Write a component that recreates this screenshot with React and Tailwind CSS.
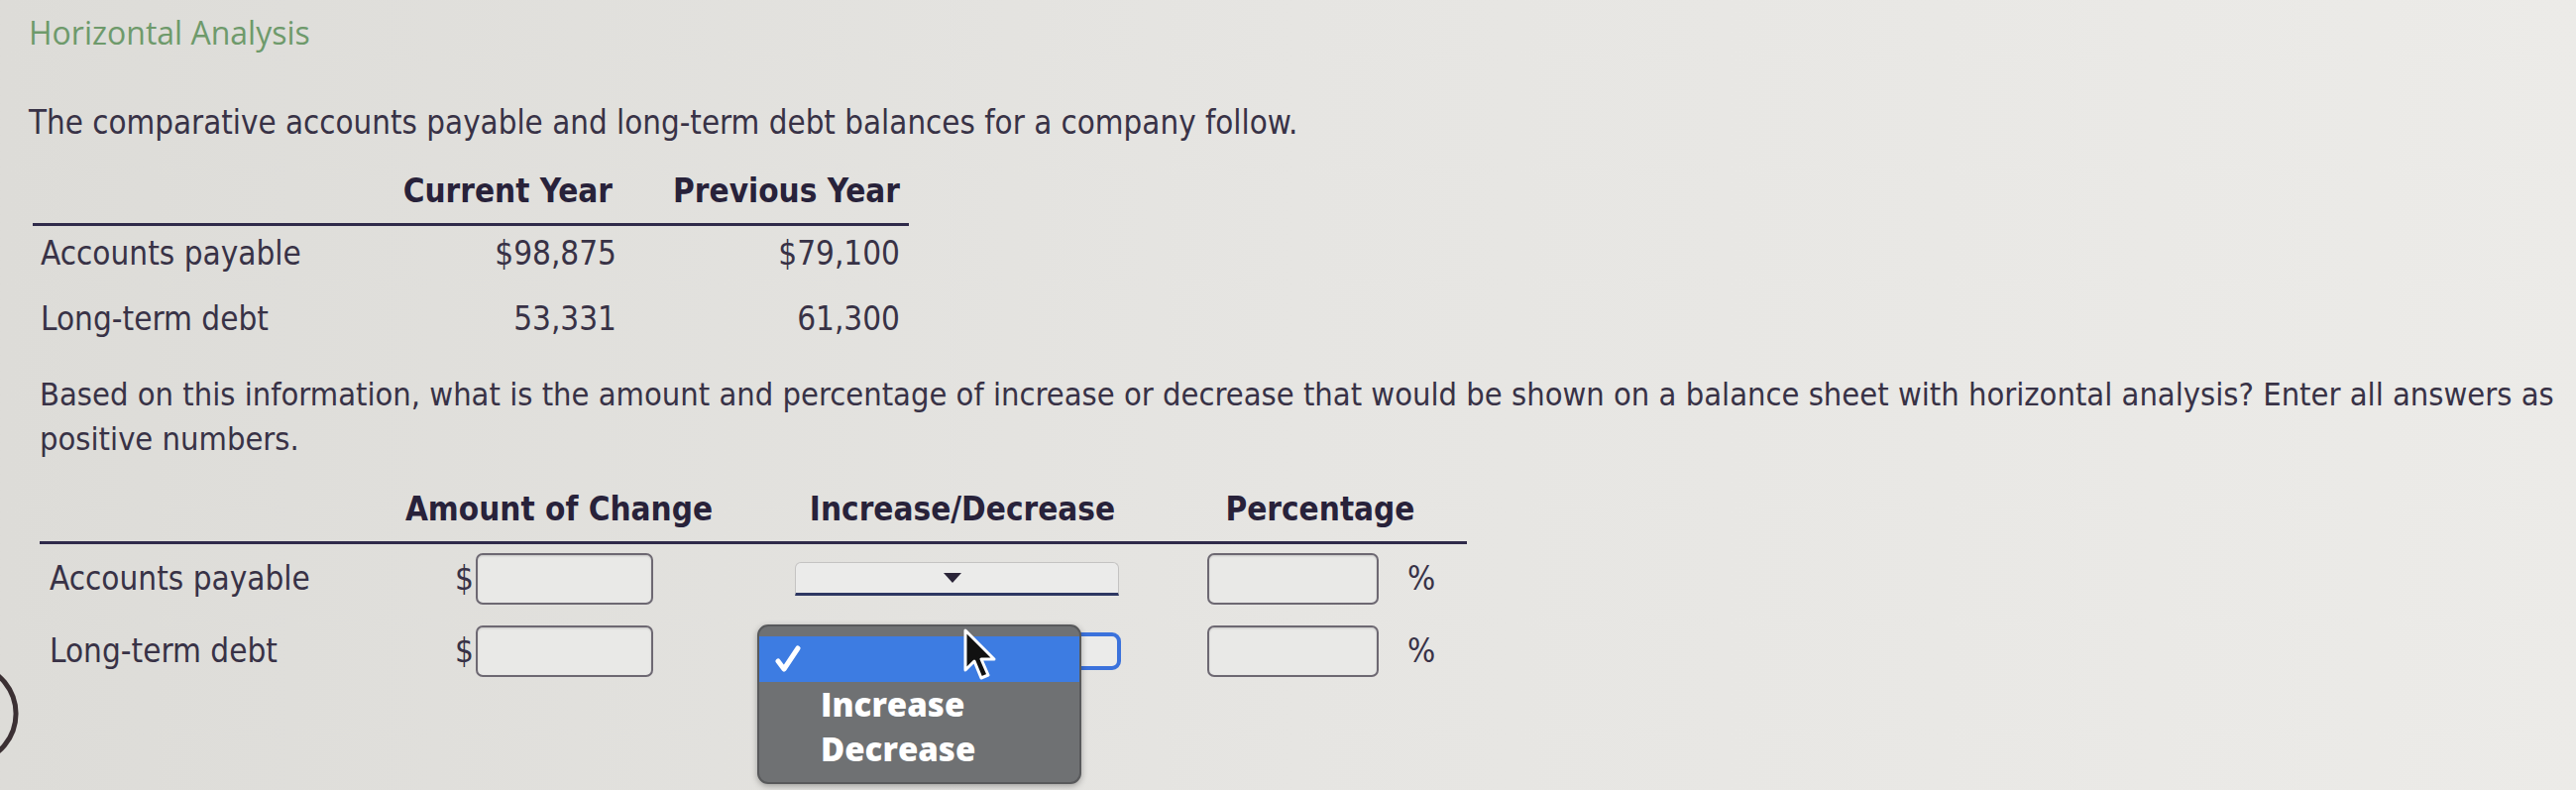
import React from 'react';

const font = { fontFamily: "'DejaVu Sans Condensed', 'Open Sans', sans-serif" };

const TextBox = ({ w }) => (
    <div className={`h-[52px] ${w} rounded-[7px] border-2 border-[#6d6872] bg-[#e9e9e7] shadow-[inset_0_1px_2px_rgba(0,0,0,0.15)]`} />
);

const App = () => {
    return (
        <div
            className="relative min-h-screen w-full overflow-hidden bg-gradient-to-r from-[#dddcd8] via-[#e6e5e2] to-[#ecebe8] text-[#383246]"
            style={font}
        >
            <div className="pl-[29px] pt-[13px]">
                <h1 className="text-[32px] leading-[40px] text-[#6e9a6b]" style={{ fontFamily: "'Open Sans', sans-serif" }}>
                    Horizontal Analysis
                </h1>
                <p className="mt-[49px] text-[32.8px] leading-[44px]">
                    The comparative accounts payable and long-term debt balances for a company follow.
                </p>

                {/* balances table */}
                <div className="ml-[4px] mt-[14px] w-[884px] text-[33px]">
                    <div className="grid h-[68px] grid-cols-[367px_230px_287px] items-center border-b-[3px] border-[#2f2a4a] font-bold text-[#28223a]">
                        <div />
                        <div className="pr-[12px] text-right">Current Year</div>
                        <div className="pr-[9px] text-right">Previous Year</div>
                    </div>
                    <div className="grid h-[56px] grid-cols-[367px_230px_287px] items-center">
                        <div className="pl-[8px]">Accounts payable</div>
                        <div className="pr-[8px] text-right">$98,875</div>
                        <div className="pr-[9px] text-right">$79,100</div>
                    </div>
                    <div className="grid h-[76px] grid-cols-[367px_230px_287px] items-center">
                        <div className="pl-[8px]">Long-term debt</div>
                        <div className="pr-[8px] text-right">53,331</div>
                        <div className="pr-[9px] text-right">61,300</div>
                    </div>
                </div>

                <p className="ml-[11px] mt-[16px] w-[2560px] text-[32.4px] leading-[45px]">
                    Based on this information, what is the amount and percentage of increase or decrease that would be shown on a balance sheet with horizontal analysis? Enter all answers as positive numbers.
                </p>

                {/* answer table */}
                <div className="ml-[11px] w-[1440px] text-[33px]">
                    <div className="grid h-[83px] grid-cols-[380px_340px_400px_320px] items-center border-b-[3px] border-[#2f2a4a] pt-[15px] font-bold text-[#28223a]">
                        <div />
                        <div className="flex justify-center whitespace-nowrap pr-[52px]">Amount of Change</div>
                        <div className="flex justify-center whitespace-nowrap pl-[22px]">Increase/Decrease</div>
                        <div className="flex justify-center whitespace-nowrap pl-[24px]">Percentage</div>
                    </div>

                    <div className="grid h-[70px] grid-cols-[380px_340px_400px_320px] items-center">
                        <div className="pl-[10px]">Accounts payable</div>
                        <div className="flex items-center gap-[2px] pl-[39px]">
                            <span>$</span>
                            <TextBox w="w-[179px]" />
                        </div>
                        <div className="pl-[42px]">
                            <div className="relative flex h-[34px] w-[327px] items-center justify-center rounded-t-[6px] border border-b-[3px] border-[#c4c3c2] border-b-[#2d3762] bg-[#ebebea]">
                                <svg width="18" height="10" viewBox="0 0 18 10" className="ml-[-10px]">
                                    <path d="M0 0 H18 L9 10 Z" fill="#2a2438" />
                                </svg>
                            </div>
                        </div>
                        <div className="flex items-center gap-[29px] pl-[58px]">
                            <TextBox w="w-[173px]" />
                            <span>%</span>
                        </div>
                    </div>

                    <div className="grid h-[76px] grid-cols-[380px_340px_400px_320px] items-center">
                        <div className="pl-[10px]">Long-term debt</div>
                        <div className="flex items-center gap-[2px] pl-[39px]">
                            <span>$</span>
                            <TextBox w="w-[179px]" />
                        </div>
                        <div className="pl-[40px]">
                            <div className="h-[38px] w-[331px] rounded-[9px] border-[4px] border-[#3b72dc] bg-[#ebebea]" />
                        </div>
                        <div className="flex items-center gap-[29px] pl-[58px]">
                            <TextBox w="w-[173px]" />
                            <span>%</span>
                        </div>
                    </div>
                </div>
            </div>

            {/* open select menu */}
            <div
                className="absolute left-[764px] top-[630px] flex h-[161px] w-[327px] flex-col overflow-hidden rounded-[11px] border-2 border-[#58595b] bg-[#6f7173] pt-[10px] text-[33px] font-extrabold text-white shadow-[0_2px_6px_rgba(0,0,0,0.3)]"
                style={{ fontFamily: "'Open Sans', sans-serif" }}
            >
                <div className="flex h-[46px] items-center bg-[#3d7ce2] pl-[16px]">
                    <svg width="26" height="28" viewBox="0 0 26 28">
                        <path d="M3 16 L9 24 L23 3" fill="none" stroke="#fff" strokeWidth="5" strokeLinecap="round" strokeLinejoin="round" />
                    </svg>
                </div>
                <div className="flex h-[45px] items-center pl-[62px]">Increase</div>
                <div className="flex h-[45px] items-center pl-[62px]">Decrease</div>
            </div>

            {/* mouse pointer */}
            <svg className="absolute left-[971px] top-[634px]" width="40" height="56" viewBox="0 0 40 56">
                <path d="M3 2 L3 42 L12 33 L19 50 L26 47 L19 31 L32 31 Z" fill="#111" stroke="#fff" strokeWidth="3" strokeLinejoin="round" />
            </svg>

            {/* edge of a ring on the left */}
            <svg className="absolute left-0 top-[668px]" width="30" height="104" viewBox="0 0 30 104">
                <path d="M0 3 A 50 50 0 0 1 0 101" fill="none" stroke="#3b3033" strokeWidth="5" transform="translate(-24 0)" />
            </svg>
        </div>
    );
};

export default App;
